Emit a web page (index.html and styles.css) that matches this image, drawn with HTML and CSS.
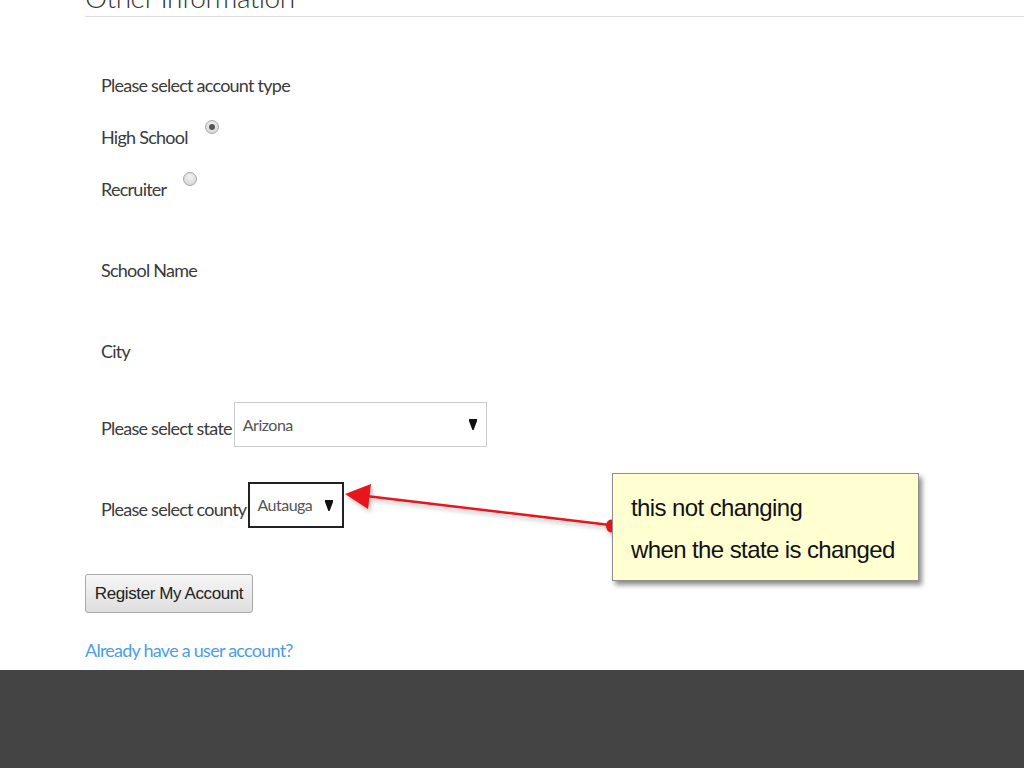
FILE: index.html
```html
<!DOCTYPE html>
<html lang="en">
<head>
    <meta charset="UTF-8">
    <meta name="viewport" content="width=device-width, initial-scale=1.0">
    <title>Register</title>
    <link rel="stylesheet" href="styles.css">
</head>
<body>

    <div class="page">
        <h3 class="section-title">Other Information</h3>

        <!-- Account details -->
        <div class="form">
            <div class="row first">
                <span class="label">Please select account type</span>
            </div>
            <div class="row tight">
                <span class="label">High School</span>
                <span class="radio checked"></span>
            </div>
            <div class="row tight">
                <span class="label">Recruiter</span>
                <span class="radio"></span>
            </div>
            <div class="row spaced">
                <span class="label">School Name</span>
            </div>
            <div class="row spaced">
                <span class="label">City</span>
            </div>
            <div class="row select-row state-row">
                <span class="label">Please select state</span>
                <div class="select state">
                    <span>Arizona</span>
                    <svg class="caret" width="8" height="11" viewBox="0 0 8 11"><path d="M0 0h8v2L4.6 11h-1.2L0 2z" fill="#111"/></svg>
                </div>
            </div>
            <div class="row select-row county-row">
                <span class="label">Please select county</span>
                <div class="select county">
                    <span>Autauga</span>
                    <svg class="caret" width="8" height="11" viewBox="0 0 8 11"><path d="M0 0h8v2L4.6 11h-1.2L0 2z" fill="#111"/></svg>
                </div>
            </div>
        </div>

        <button class="register-btn" type="button">Register My Account</button>
        <a class="login-link" href="#">Already have a user account?</a>
    </div>

    <div class="footer"></div>

    <!-- Screenshot annotation -->
    <svg class="annotation-arrow" width="1024" height="768" viewBox="0 0 1024 768">
        <defs>
            <filter id="arrowShadow" x="-10%" y="-50%" width="120%" height="200%">
                <feDropShadow dx="2" dy="3" stdDeviation="2" flood-color="#000" flood-opacity="0.25"/>
            </filter>
        </defs>
        <g filter="url(#arrowShadow)">
            <line x1="610" y1="525" x2="366" y2="496" stroke="#e8141a" stroke-width="2.5"/>
            <polygon points="345,494 371,484 368,509" fill="#e8141a"/>
            <ellipse cx="611" cy="526" rx="5" ry="6.5" fill="#e8141a"/>
        </g>
    </svg>
    <div class="callout">
        this not changing<br>
        when the state is changed
    </div>

</body>
</html>
```

FILE: styles.css
```css
/* Reset default margin/padding */
* {
    margin: 0;
    padding: 0;
    box-sizing: border-box;
}

html, body {
    height: 100%;
}

body {
    font-family: Lato, "Open Sans", sans-serif;
    color: #3a3a3a;
    background-color: #fff;
    display: flex;
    flex-direction: column;
    overflow: hidden;
}

.page {
    padding: 0 0 8px 85px;
}

/* Section heading, page is scrolled so its top is cut off */
.section-title {
    margin-top: -22px;
    font-size: 28px;
    font-weight: 300;
    letter-spacing: -0.5px;
    line-height: 38px;
    color: #333;
    border-bottom: 1px solid #ddd;
}

.form {
    padding-left: 16px;
}

.row {
    display: flex;
    height: 40px;
    line-height: 40px;
}

.label {
    font-size: 18px;
    letter-spacing: -0.75px;
    white-space: nowrap;
}

.row.first {
    margin-top: 48px;
}

.row.tight {
    margin-top: 12px;
}

.row.spaced {
    margin-top: 41px;
}

/* Radio buttons sit a bit higher than the label */
.radio {
    width: 14px;
    height: 14px;
    margin: 3px 0 0 17px;
    border: 1px solid #a8a8a8;
    border-radius: 50%;
    background: radial-gradient(circle at 50% 35%, #f4f4f4, #cfcfcf);
    display: flex;
    align-items: center;
    justify-content: center;
}

.radio.checked::after {
    content: '';
    width: 6px;
    height: 6px;
    border-radius: 50%;
    background: #555;
}

/* Labels next to selects sit on the select's bottom edge */
.select-row {
    align-items: flex-end;
    height: auto;
}

.select-row .label {
    line-height: 38px;
}

.state-row {
    margin-top: 31px;
}

.county-row {
    margin-top: 35px;
}

.select {
    display: flex;
    align-items: center;
    justify-content: space-between;
    margin-left: 2px;
    font-size: 16px;
    letter-spacing: -0.5px;
    color: #555;
    background: #fff;
}

.select.state {
    width: 253px;
    height: 45px;
    padding: 0 9px 0 8px;
    border: 1px solid #ccc;
}

.select.county {
    width: 96px;
    height: 46px;
    padding: 0 9px 0 7px;
    border: 2px solid #222;
}

.caret {
    display: block;
}

.register-btn {
    display: block;
    margin-top: 46px;
    width: 168px;
    height: 39px;
    font-family: "Liberation Sans", Arial, sans-serif;
    font-size: 17px;
    letter-spacing: -0.4px;
    white-space: nowrap;
    color: #222;
    background: linear-gradient(#f6f6f6, #dedede);
    border: 1px solid #a9a9a9;
    border-radius: 3px;
    cursor: pointer;
}

.login-link {
    display: block;
    margin-top: 25px;
    width: max-content;
    font-size: 18px;
    letter-spacing: -0.75px;
    line-height: 24px;
    color: #4a9ee6;
    text-decoration: none;
}

.footer {
    flex: 1;
    background-color: #444;
}

/* Annotation drawn over the screenshot */
.annotation-arrow {
    position: absolute;
    top: 0;
    left: 0;
    pointer-events: none;
}

.callout {
    position: absolute;
    left: 612px;
    top: 473px;
    width: 307px;
    height: 108px;
    padding: 13px 0 0 18px;
    background: #ffffd2;
    border: 1px solid #8e8e8e;
    box-shadow: 3px 4px 5px rgba(0, 0, 0, 0.45);
    font-family: "Liberation Sans", Arial, sans-serif;
    font-size: 24px;
    letter-spacing: -0.6px;
    line-height: 42px;
    white-space: nowrap;
    color: #111;
}
```
